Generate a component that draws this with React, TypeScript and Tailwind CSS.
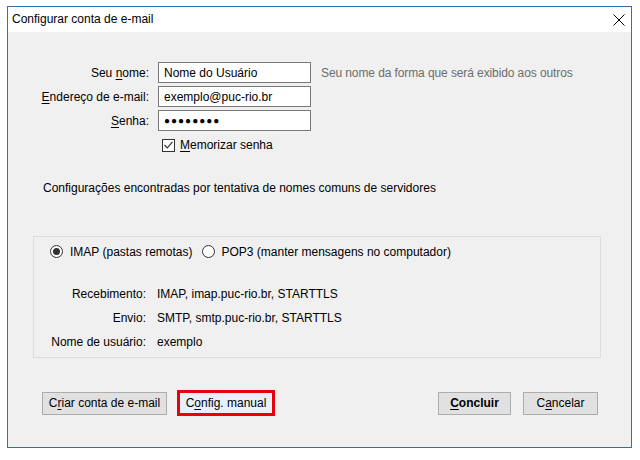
import React from "react";

const U = ({ children }: { children: React.ReactNode }) => (
  <span className="underline underline-offset-2">{children}</span>
);

const Field = ({ label, value, hint }: { label: React.ReactNode; value: React.ReactNode; hint?: string }) => (
  <div className="flex items-center h-[21px]">
    <div className="w-[141px] text-right">{label}</div>
    <div className="ml-[9px] w-[153px] h-[21px] bg-white border border-[#7a7a7a] flex items-center px-[5px]">
      {value}
    </div>
    {hint && <div className="ml-[10px] text-[#6d6d6d] tracking-[-0.1px]">{hint}</div>}
  </div>
);

const Btn = ({ children, bold, className = "" }: { children: React.ReactNode; bold?: boolean; className?: string }) => (
  <button
    className={`h-[23px] px-[4px] whitespace-nowrap bg-[#e1e1e1] border border-[#adadad] text-black ${bold ? "font-bold" : ""} ${className}`}
  >
    {children}
  </button>
);

const Info = ({ label, value }: { label: string; value: string }) => (
  <div className="flex items-center h-[24px]">
    <div className="w-[112px] text-right">{label}</div>
    <div className="ml-[11px]">{value}</div>
  </div>
);

export default function App() {
  return (
    <div
      className="w-[640px] h-[460px] bg-white pt-[6px] pl-[7px] text-[12px] text-black leading-none"
      style={{ fontFamily: '"Liberation Sans", Arial, sans-serif' }}
    >
      <div className="w-[625px] h-[442px] border border-[#2b73b0] flex flex-col">
        {/* title bar */}
        <div className="h-[25px] bg-white flex items-center justify-between pl-[4px] pr-[6px]">
          <span className="-mt-[1px]">Configurar conta de e-mail</span>
          <svg width="12" height="12" viewBox="0 0 12 12">
            <path d="M0.5 0.5 L11.5 11.5 M11.5 0.5 L0.5 11.5" stroke="#000" strokeWidth="1" />
          </svg>
        </div>

        {/* body */}
        <div className="flex-1 bg-[#f0f0f0] flex flex-col pt-[30px]">
          <div className="flex flex-col gap-[3px]">
            <Field
              label={<>Seu <U>n</U>ome:</>}
              value="Nome do Usuário"
              hint="Seu nome da forma que será exibido aos outros"
            />
            <Field label={<><U>E</U>ndereço de e-mail:</>} value="exemplo@puc-rio.br" />
            <Field
              label={<><U>S</U>enha:</>}
              value={<span className="tracking-[1px] text-[10px]">●●●●●●●●</span>}
            />
          </div>
          <div className="flex items-center mt-[7px] ml-[154px] h-[14px]">
            <div className="w-[13px] h-[13px] border border-[#333] bg-white flex items-center justify-center">
              <svg width="9" height="8" viewBox="0 0 9 8">
                <path d="M0.5 4 L3.3 6.8 L8.5 0.8" fill="none" stroke="#333" strokeWidth="1.2" />
              </svg>
            </div>
            <span className="ml-[5px]"><U>M</U>emorizar senha</span>
          </div>

          <div className="ml-[35px] mt-[30px]">Configurações encontradas por tentativa de nomes comuns de servidores</div>

          {/* group box */}
          <div className="ml-[25px] mt-[42px] w-[568px] h-[122px] border border-[#dcdcdc] flex flex-col">
            <div className="flex items-center mt-[8px] ml-[16px] h-[13px]">
              <div className="w-[13px] h-[13px] rounded-full border border-[#333] bg-white flex items-center justify-center">
                <div className="w-[7px] h-[7px] rounded-full bg-[#333]" />
              </div>
              <span className="ml-[7px]">IMAP (pastas remotas)</span>
              <div className="ml-[10px] w-[13px] h-[13px] rounded-full border border-[#333] bg-white" />
              <span className="ml-[6px]">POP3 (manter mensagens no computador)</span>
            </div>
            <div className="mt-[24px] flex flex-col">
              <Info label="Recebimento:" value="IMAP, imap.puc-rio.br, STARTTLS" />
              <Info label="Envio:" value="SMTP, smtp.puc-rio.br, STARTTLS" />
              <Info label="Nome de usuário:" value="exemplo" />
            </div>
          </div>

          {/* buttons */}
          <div className="flex items-center mt-[32px] pl-[34px] pr-[33px]">
            <Btn className="w-[125px]">C<U>r</U>iar conta de e-mail</Btn>
            <div className="ml-[10px] border-[3px] border-[#e8000b]">
              <button className="h-[20px] w-[92px] whitespace-nowrap bg-[#e5f1fb] text-black">
                C<U>o</U>nfig. manual
              </button>
            </div>
            <div className="flex-1" />
            <Btn bold className="w-[73px]"><U>C</U>oncluir</Btn>
            <Btn className="w-[75px] ml-[12px]">C<U>a</U>ncelar</Btn>
          </div>
        </div>
      </div>
    </div>
  );
}
